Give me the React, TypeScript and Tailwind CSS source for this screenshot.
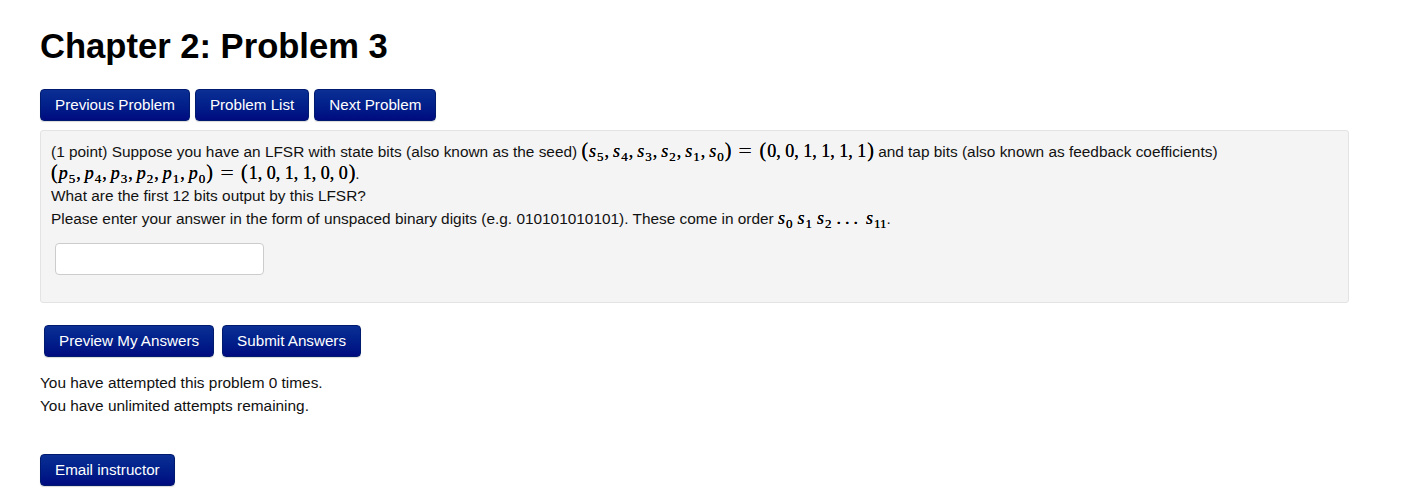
import React from "react";

const btn =
  "h-8 px-[14px] rounded-[4px] text-white text-[15.2px] leading-none bg-gradient-to-b from-[#0b2f94] to-[#000a80] border border-[#001a6e] shadow-[0_1px_1px_rgba(0,0,0,0.15)]";

function Sym({ v, sub, gap }: { v: string; sub?: string; gap?: boolean }) {
  return (
    <span className={gap ? "inline-block mr-[5px]" : "inline-block"}>
      <i className="mr-[1px]">{v}</i>
      {sub && <span className="text-[13px] not-italic align-[-4px]">{sub}</span>}
    </span>
  );
}

function Tuple({ v, subs }: { v: string; subs: string[] }) {
  return (
    <>
      <span className="text-[20px] mr-[1px]">(</span>
      {subs.map((s, i) => (
        <React.Fragment key={s}>
          <Sym v={v} sub={s} />
          {i < subs.length - 1 && <span className="ml-[1px] mr-[4px]">,</span>}
        </React.Fragment>
      ))}
      <span className="text-[20px] ml-[1px]">)</span>
    </>
  );
}

function Nums({ vals }: { vals: string[] }) {
  return (
    <>
      <span className="text-[20px] mr-[1px]">(</span>
      {vals.map((n, i) => (
        <React.Fragment key={i}>
          <span>{n}</span>
          {i < vals.length - 1 && <span className="mr-[4.5px]">,</span>}
        </React.Fragment>
      ))}
      <span className="text-[20px] ml-[1px]">)</span>
    </>
  );
}

function Eq() {
  return <span className="mx-[9px] inline-block scale-x-[1.3]">=</span>;
}

function Math({ children }: { children: React.ReactNode }) {
  return (
    <span className="font-['Liberation_Serif',serif] text-[18px] leading-[14px] text-black whitespace-nowrap [text-shadow:0_0_0.5px_#000]">
      {children}
    </span>
  );
}

export default function App() {
  return (
    <div className="min-h-screen bg-white px-10 pt-[29px] font-['Liberation_Sans',Arial,sans-serif] text-[15.4px] text-[#111]">
      <h1 className="text-[34.6px] font-bold leading-none text-black">Chapter 2: Problem 3</h1>

      <div className="mt-[25px] flex gap-[5px]">
        <button className={btn}>Previous Problem</button>
        <button className={btn}>Problem List</button>
        <button className={btn}>Next Problem</button>
      </div>

      <div className="mt-[9px] w-[1309px] rounded-[3px] border border-[#e3e3e3] bg-[#f4f4f4] px-[10px] pt-[11px] pb-[27px]">
        <div className="h-[20px] leading-[20px] whitespace-nowrap">
          (1 point) Suppose you have an LFSR with state bits (also known as the seed){" "}
          <Math>
            <Tuple v="s" subs={["5", "4", "3", "2", "1", "0"]} />
            <Eq />
            <Nums vals={["0", "0", "1", "1", "1", "1"]} />
          </Math>{" "}
          and tap bits (also known as feedback coefficients)
        </div>
        <div className="mt-[2px] h-[20px] leading-[20px] whitespace-nowrap">
          <Math>
            <Tuple v="p" subs={["5", "4", "3", "2", "1", "0"]} />
            <Eq />
            <Nums vals={["1", "0", "1", "1", "0", "0"]} />
          </Math>
          .
        </div>
        <div className="h-[23px] leading-[23px]">What are the first 12 bits output by this LFSR?</div>
        <div className="h-[23px] leading-[23px] whitespace-nowrap">
          Please enter your answer in the form of unspaced binary digits (e.g. 010101010101). These come in order{" "}
          <Math>
            <Sym v="s" sub="0" gap />
            <Sym v="s" sub="1" gap />
            <Sym v="s" sub="2" gap />
            <span className="mr-[4px] tracking-[4px]">...</span>
            <Sym v="s" sub="11" />
          </Math>
          .
        </div>
        <input
          type="text"
          className="mt-[13px] ml-[4px] block h-8 w-[209px] rounded-[4px] border border-[#cccccc] bg-white px-2 outline-none"
        />
      </div>

      <div className="mt-[22px] ml-[4px] flex gap-[8px]">
        <button className={btn}>Preview My Answers</button>
        <button className={btn}>Submit Answers</button>
      </div>

      <div className="mt-[14px] leading-[23px]">
        <div>You have attempted this problem 0 times.</div>
        <div>You have unlimited attempts remaining.</div>
      </div>

      <div className="mt-[37px]">
        <button className={btn}>Email instructor</button>
      </div>
    </div>
  );
}
